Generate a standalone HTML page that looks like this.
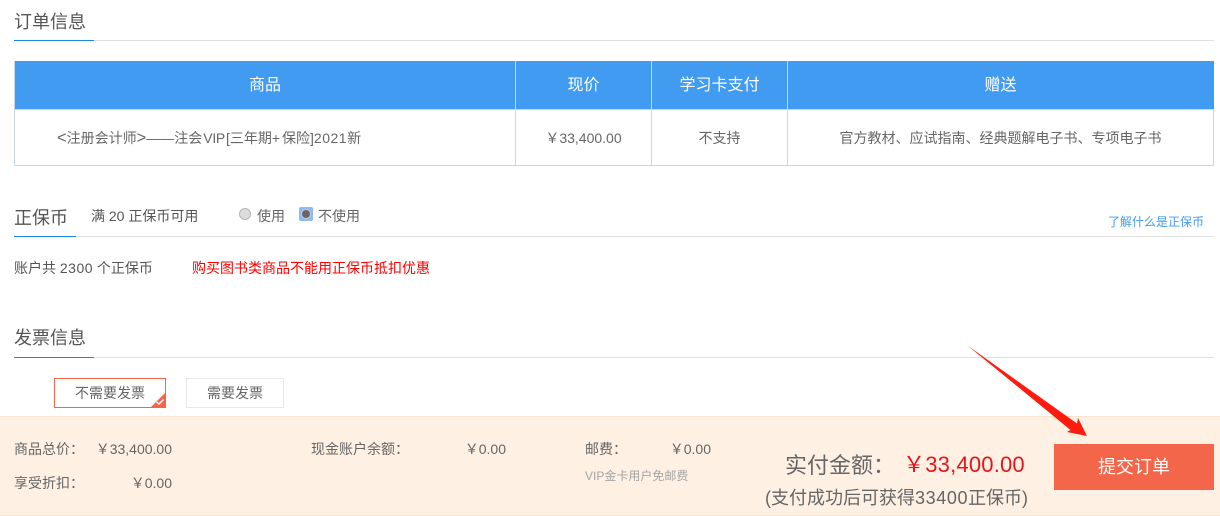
<!DOCTYPE html>
<html>
<head>
<meta charset="utf-8">
<style>
html,body{margin:0;padding:0;background:#fff;}
body{width:1220px;height:516px;overflow:hidden;position:relative;font-family:"Liberation Sans","Noto Sans CJK SC",sans-serif;color:#666;}
.a{position:absolute;white-space:nowrap;line-height:20px;}
.c{text-align:center;}
.b{position:absolute;}
</style>
</head>
<body>
<!-- Section 1 -->
<div class="a" style="left:14px;top:12px;font-size:18px;color:#555;">订单信息</div>
<div class="b" style="left:14px;top:40px;width:1200px;height:1px;background:#e0e0e0;"></div>
<div class="b" style="left:14px;top:40px;width:80px;height:1px;background:#1a87e0;"></div>

<!-- Table -->
<div class="b" style="left:14px;top:61px;width:1200px;height:48px;background:#419bf0;"></div>
<div class="b" style="left:14px;top:109px;width:1200px;height:1px;background:#c6d7ee;"></div>
<div class="b" style="left:14px;top:165px;width:1200px;height:1px;background:#c6d7ee;"></div>
<div class="b" style="left:14px;top:61px;width:1px;height:105px;background:#c6d7ee;"></div>
<div class="b" style="left:1213px;top:110px;width:1px;height:56px;background:#c6d7ee;"></div>
<div class="b" style="left:515px;top:61px;width:1px;height:105px;background:#c6d7ee;"></div>
<div class="b" style="left:651px;top:61px;width:1px;height:105px;background:#c6d7ee;"></div>
<div class="b" style="left:787px;top:61px;width:1px;height:105px;background:#c6d7ee;"></div>

<div class="a c" style="left:15px;width:500px;top:76px;font-size:16px;color:#fff;">商品</div>
<div class="a c" style="left:516px;width:135px;top:76px;font-size:16px;color:#fff;">现价</div>
<div class="a c" style="left:652px;width:135px;top:76px;font-size:16px;color:#fff;">学习卡支付</div>
<div class="a c" style="left:788px;width:425px;top:76px;font-size:16px;color:#fff;">赠送</div>

<div class="a" style="left:57px;top:128px;font-size:14px;"><span style="font-size:16.5px;line-height:14px;">&lt;</span>注册会计师<span style="font-size:16.5px;line-height:14px;">&gt;</span>——注会<span style="margin-left:1px;letter-spacing:-.3px;">VIP</span><span style="margin-left:1px;">[</span>三年期<span style="letter-spacing:2px;">+</span>保险]<span style="letter-spacing:.5px;">2021</span>新</div>
<div class="a c" style="left:516px;width:135px;top:128px;font-size:14px;">￥33,400.00</div>
<div class="a c" style="left:652px;width:135px;top:128px;font-size:14px;">不支持</div>
<div class="a c" style="left:788px;width:425px;top:128px;font-size:14px;">官方教材、应试指南、经典题解电子书、专项电子书</div>

<!-- Section 2 -->
<div class="a" style="left:14px;top:208px;font-size:18px;color:#555;">正保币</div>
<div class="a" style="left:91px;top:206px;font-size:14px;color:#555;">满 20 正保币可用</div>
<div class="b" style="left:239px;top:208px;width:10px;height:10px;border-radius:50%;background:#ddd;border:1px solid #b5b5b5;"></div>
<div class="a" style="left:257px;top:206px;font-size:14px;">使用</div>
<div class="b" style="left:299px;top:207px;width:14px;height:14px;border-radius:2px;background:#90b8f4;"></div>
<div class="b" style="left:301px;top:209px;width:8px;height:8px;border-radius:50%;background:#666;border:1px solid #ccc;"></div>
<div class="a" style="left:318px;top:206px;font-size:14px;">不使用</div>
<div class="a" style="left:1108px;top:212px;font-size:12px;color:#419bf0;">了解什么是正保币</div>
<div class="b" style="left:14px;top:236px;width:1200px;height:1px;background:#e0e0e0;"></div>
<div class="b" style="left:14px;top:236px;width:62px;height:1px;background:#1a87e0;"></div>

<div class="a" style="left:14px;top:258px;font-size:14px;color:#555;">账户共 <span style="letter-spacing:.5px;">2300</span> 个正保币</div>
<div class="a" style="left:192px;top:258px;font-size:14px;color:#f00;">购买图书类商品不能用正保币抵扣优惠</div>

<!-- Section 3 -->
<div class="a" style="left:14px;top:328px;font-size:18px;color:#555;">发票信息</div>
<div class="b" style="left:14px;top:357px;width:1200px;height:1px;background:#e0e0e0;"></div>
<div class="b" style="left:14px;top:357px;width:80px;height:1px;background:#1a87e0;"></div>

<div class="b" style="left:54px;top:378px;width:110px;height:28px;border:1px solid #f4664a;background:#fff;"></div>
<div class="a c" style="left:54px;width:112px;top:383px;font-size:14px;">不需要发票</div>
<svg class="b" style="left:150px;top:392px;" width="16" height="16" viewBox="0 0 16 16"><polygon points="16,0 16,16 0,16" fill="#f4664a"/><path d="M6.5 10 L9 12 L13.5 7.5" stroke="#fff" stroke-width="1.5" fill="none"/></svg>
<div class="b" style="left:186px;top:378px;width:96px;height:28px;border:1px solid #e8e8e8;background:#fff;"></div>
<div class="a c" style="left:186px;width:98px;top:383px;font-size:14px;">需要发票</div>

<!-- Bottom bar -->
<div class="b" style="left:0;top:416px;width:1220px;height:100px;background:#fef0e3;border-top:1px solid #fde3cc;box-sizing:border-box;border-bottom:1px solid #fde3cc;"></div>

<div class="a" style="left:14px;top:439px;font-size:14px;">商品总价：</div>
<div class="a" style="left:72px;width:100px;text-align:right;top:439px;font-size:14px;">￥33,400.00</div>
<div class="a" style="left:14px;top:473px;font-size:14px;">享受折扣：</div>
<div class="a" style="left:72px;width:100px;text-align:right;top:473px;font-size:14px;">￥0.00</div>

<div class="a" style="left:311px;top:439px;font-size:14px;">现金账户余额：</div>
<div class="a" style="left:406px;width:100px;text-align:right;top:439px;font-size:14px;">￥0.00</div>
<div class="a" style="left:585px;top:439px;font-size:14px;">邮费：</div>
<div class="a" style="left:611px;width:100px;text-align:right;top:439px;font-size:14px;">￥0.00</div>
<div class="a" style="left:585px;top:466px;font-size:12px;color:#a5a5a5;">VIP金卡用户免邮费</div>

<div class="a" style="left:785px;top:454px;font-size:22px;line-height:24px;">实付金额：</div>
<div class="a" style="left:903px;top:453px;font-size:22px;line-height:24px;color:#e8141c;letter-spacing:.2px;">￥33,400.00</div>
<div class="a" style="left:765px;top:488px;font-size:18px;">(支付成功后可获得<span style="letter-spacing:.6px;">33400</span>正保币)</div>

<div class="b" style="left:1054px;top:444px;width:160px;height:46px;background:#f4664a;"></div>
<div class="a c" style="left:1054px;width:160px;top:457px;font-size:18px;color:#fff;">提交订单</div>

<!-- Arrow -->
<svg class="b" style="left:0;top:0;" width="1220" height="516" viewBox="0 0 1220 516"><polygon points="967.5,345.5 1077,423.5 1078,418 1087,436 1067,432 1070.5,430" fill="#fe1a0c"/></svg>
</body>
</html>
